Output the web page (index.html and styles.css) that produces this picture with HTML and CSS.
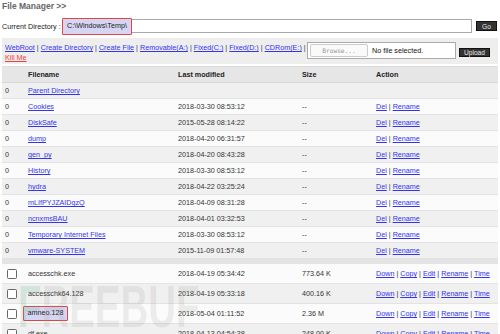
FILE: index.html
```html
<!DOCTYPE html>
<html lang="en">
<head>
    <meta charset="UTF-8">
    <meta name="viewport" content="width=device-width, initial-scale=1.0">
    <title>File Manager</title>
    <link rel="stylesheet" href="styles.css">
</head>
<body>
  <div class="title">File Manager &gt;&gt;</div>

  <div class="curdir">
    <span class="label">Current Directory :</span>
    <div class="path"><span class="mark">C:\Windows\Temp\</span></div>
    <button class="btn go">Go</button>
  </div>

  <div class="panel">
    <div class="links">
      <a href="">WebRoot</a> | <a href="">Create Directory</a> | <a href="">Create File</a> | <a href="">Removable(A:)</a> | <a href="">Fixed(C:)</a> | <a href="">Fixed(D:)</a> | <a href="">CDRom(E:)</a> |<br>
      <a href="" class="kill">Kill Me</a>
    </div>
    <div class="upload">
      <div class="filebox"><span class="browse">Browse...</span><span class="nofile">No file selected.</span></div>
      <button class="btn up">Upload</button>
    </div>
  </div>

  <table class="files">
    <colgroup>
      <col class="c1"><col class="c2"><col class="c3"><col class="c4"><col class="c5">
    </colgroup>
    <thead>
      <tr><th></th><th>Filename</th><th>Last modified</th><th>Size</th><th>Action</th></tr>
    </thead>
    <tbody>
      <tr class="g"><td>0</td><td><a href="">Parent Directory</a></td><td></td><td></td><td></td></tr>
      <tr class="w"><td>0</td><td><a href="">Cookies</a></td><td>2018-03-30 08:53:12</td><td>--</td><td><a href="">Del</a> | <a href="">Rename</a></td></tr>
      <tr class="g"><td>0</td><td><a href="">DiskSafe</a></td><td>2015-05-28 08:14:22</td><td>--</td><td><a href="">Del</a> | <a href="">Rename</a></td></tr>
      <tr class="w"><td>0</td><td><a href="">dump</a></td><td>2018-04-20 06:31:57</td><td>--</td><td><a href="">Del</a> | <a href="">Rename</a></td></tr>
      <tr class="g"><td>0</td><td><a href="">gen_py</a></td><td>2018-04-20 08:43:28</td><td>--</td><td><a href="">Del</a> | <a href="">Rename</a></td></tr>
      <tr class="w"><td>0</td><td><a href="">History</a></td><td>2018-03-30 08:53:12</td><td>--</td><td><a href="">Del</a> | <a href="">Rename</a></td></tr>
      <tr class="g"><td>0</td><td><a href="">hydra</a></td><td>2018-04-22 03:25:24</td><td>--</td><td><a href="">Del</a> | <a href="">Rename</a></td></tr>
      <tr class="w"><td>0</td><td><a href="">mLIfPYJZAIDgzQ</a></td><td>2018-04-09 08:31:28</td><td>--</td><td><a href="">Del</a> | <a href="">Rename</a></td></tr>
      <tr class="g"><td>0</td><td><a href="">ncnxmsBAU</a></td><td>2018-04-01 03:32:53</td><td>--</td><td><a href="">Del</a> | <a href="">Rename</a></td></tr>
      <tr class="w"><td>0</td><td><a href="">Temporary Internet Files</a></td><td>2018-03-30 08:53:12</td><td>--</td><td><a href="">Del</a> | <a href="">Rename</a></td></tr>
      <tr class="g"><td>0</td><td><a href="">vmware-SYSTEM</a></td><td>2015-11-09 01:57:48</td><td>--</td><td><a href="">Del</a> | <a href="">Rename</a></td></tr>
      <tr class="gap"><td colspan="5"></td></tr>
      <tr class="w file"><td><input type="checkbox" class="cb"></td><td>accesschk.exe</td><td>2018-04-19 05:34:42</td><td>773.64 K</td><td><a href="">Down</a> | <a href="">Copy</a> | <a href="">Edit</a> | <a href="">Rename</a> | <a href="">Time</a></td></tr>
      <tr class="g file"><td><input type="checkbox" class="cb"></td><td>accesschk64.128</td><td>2018-04-19 05:33:18</td><td>400.16 K</td><td><a href="">Down</a> | <a href="">Copy</a> | <a href="">Edit</a> | <a href="">Rename</a> | <a href="">Time</a></td></tr>
      <tr class="w file"><td><input type="checkbox" class="cb"></td><td><span class="mark fn">amneo.128</span></td><td>2018-05-04 01:11:52</td><td>2.36 M</td><td><a href="">Down</a> | <a href="">Copy</a> | <a href="">Edit</a> | <a href="">Rename</a> | <a href="">Time</a></td></tr>
      <tr class="g file"><td><input type="checkbox" class="cb"></td><td>df.exe</td><td>2018-04-13 04:54:38</td><td>248.00 K</td><td><a href="">Down</a> | <a href="">Copy</a> | <a href="">Edit</a> | <a href="">Rename</a> | <a href="">Time</a></td></tr>
    </tbody>
  </table>

  <div class="watermark"><span class="wm-f">F</span>REEBUF</div>
</body>
</html>
```
FILE: styles.css
```css
* {
    margin: 0;
    padding: 0;
    box-sizing: border-box;
}
body {
    font-family: "Liberation Sans", Arial, sans-serif;
    font-size: 7.2px;
    color: #333;
    background-color: #fff;
    padding: 0 2px;
    height: 334px;
    overflow: hidden;
    position: relative;
}
a {
    color: #3434ee;
    text-decoration: underline;
}
.btn {
    font-family: "Liberation Sans", Arial, sans-serif;
    background-color: #333;
    color: #e8e8e8;
    border: 1px solid #111;
    font-size: 6.6px;
    line-height: 7px;
}

/* header */
.title {
    font-size: 8.5px;
    font-weight: bold;
    color: #666;
    height: 13px;
    line-height: 13px;
}
.curdir {
    display: flex;
    align-items: center;
    height: 20px;
    margin-top: 3px;
}
.label {
    width: 60px;
    color: #222;
}
.path {
    width: 410px;
    height: 14px;
    border: 1px solid #a9a9a9;
    background-color: #fff;
    display: flex;
    align-items: center;
}
.mark {
    display: inline-block;
    height: 17px;
    line-height: 14px;
    border: 1.5px solid #e5433f;
    border-radius: 1px;
    background-color: #d6d6f4;
    padding: 0 4px;
    margin-left: -1px;
    color: #222;
}
.go {
    margin-left: 4px;
    width: 21px;
    height: 10px;
}

/* toolbar */
.panel {
    margin-top: 2px;
    background-color: #eee;
    display: flex;
    height: 26px;
    padding: 5px 3px 0 3px;
}
.links {
    width: 302px;
    line-height: 9.5px;
    white-space: nowrap;
}
.links .kill {
    color: #f03c3c;
}
.upload {
    display: flex;
    align-items: center;
    margin-top: -1px;
    height: 17px;
}
.filebox {
    width: 149px;
    height: 17px;
    border: 1px solid #aaa;
    background-color: #fff;
    display: flex;
    align-items: center;
    padding-left: 2px;
}
.browse {
    width: 58px;
    height: 13px;
    border: 1px solid #ccc;
    border-radius: 2px;
    background-color: #fafafa;
    color: #999;
    font-family: "DejaVu Sans Mono", monospace;
    font-size: 6.2px;
    display: flex;
    align-items: center;
    justify-content: center;
}
.nofile {
    margin-left: 4px;
    color: #111;
}
.up {
    margin-left: 3px;
    margin-top: 3px;
    width: 31px;
    height: 9px;
}

/* listing */
.files {
    margin-top: 2px;
    width: 496px;
    border-collapse: collapse;
    table-layout: fixed;
}
.c1 { width: 23px; }
.c2 { width: 150px; }
.c3 { width: 124px; }
.c4 { width: 74px; }
.c5 { width: 125px; }
.files th {
    height: 16px;
    background-color: #e6e6e6;
    border-top: 1px solid #ddd;
    border-bottom: 1px solid #d8d8d8;
    text-align: left;
    padding-left: 3px;
    color: #222;
    font-weight: bold;
}
.files td {
    height: 16px;
    padding: 0 3px;
    border-bottom: 1px solid #e3e3e3;
    white-space: nowrap;
    color: #333;
}
.files tr.g td {
    background-color: #f0f0f0;
}
.files tr.w td {
    background-color: #fbfbfb;
}
.files tr.gap td {
    height: 5px;
    padding: 0;
    background-color: #e4e4e4;
}
.files tr.file td {
    height: 20px;
}
.cb {
    appearance: none;
    display: block;
    width: 10px;
    height: 10px;
    margin-left: 2px;
    border: 1px solid #666;
    border-radius: 1.5px;
    background-color: #fff;
}
.mark.fn {
    height: 15px;
    line-height: 12px;
    margin-left: -5.5px;
    vertical-align: middle;
}

/* watermark laid over the listing */
.watermark {
    position: absolute;
    left: 18px;
    top: 277px;
    font-size: 60px;
    line-height: 60px;
    font-weight: bold;
    color: rgba(150, 150, 150, 0.16);
    transform: scaleX(0.64);
    transform-origin: left top;
    pointer-events: none;
    white-space: nowrap;
}
.wm-f {
    color: rgba(90, 180, 140, 0.2);
}
```
